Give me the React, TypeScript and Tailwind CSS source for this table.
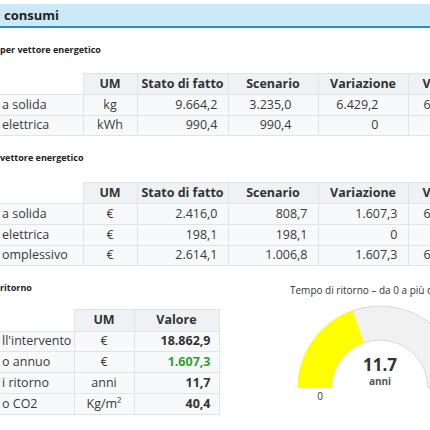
import React from "react";

const border = "border-[#dfe4e8]";

type Row = { label: string; um: string; cells: string[]; last?: string; h: string };

function BigTable({ rows, pads }: { rows: Row[]; pads: string[] }) {
  return (
    <table className="table-fixed border-collapse text-[12.5px] text-[#3a3a3a]" style={{ width: 498 }}>
      <colgroup>
        <col style={{ width: 83 }} />
        <col style={{ width: 54 }} />
        <col style={{ width: 91 }} />
        <col style={{ width: 90 }} />
        <col style={{ width: 90 }} />
        <col style={{ width: 90 }} />
      </colgroup>
      <thead>
        <tr className="h-[21px] text-[12.5px] text-[#333]">
          <th className="bg-white p-0"></th>
          <th className={`bg-[#eef2f5] border ${border} font-bold text-center p-0`}>UM</th>
          <th className={`bg-[#eef2f5] border ${border} font-bold text-center p-0 whitespace-nowrap`}>Stato di fatto</th>
          <th className={`bg-[#eef2f5] border ${border} font-bold text-center p-0`}>Scenario</th>
          <th className={`bg-[#eef2f5] border ${border} font-bold text-center p-0`}>Variazione</th>
          <th className={`bg-[#eef2f5] border ${border} font-bold text-left p-0 pl-[14px] whitespace-nowrap overflow-hidden`}>Variazione %</th>
        </tr>
      </thead>
      <tbody>
        {rows.map((r, i) => (
          <tr key={i} className={`${r.h} bg-[#f8f9fa]`}>
            <td className={`border-b border-t ${border} pl-[2px] p-0 whitespace-nowrap`}>{r.label}</td>
            <td className={`border ${border} text-center p-0`}>{r.um}</td>
            {r.cells.map((c, j) => (
              <td key={j} className={`border ${border} text-right p-0 ${pads[j]}`}>{c}</td>
            ))}
            <td className={`border ${border} text-left p-0 pl-[15px] whitespace-nowrap overflow-hidden`}>{r.last ?? ""}</td>
          </tr>
        ))}
      </tbody>
    </table>
  );
}

export default function App() {
  return (
    <div
      className="w-[430px] h-[430px] overflow-hidden bg-white relative"
      style={{ fontFamily: '"Open Sans", "Liberation Sans", sans-serif' }}
    >
      <div className="mt-[4px] h-[24px] bg-[#cce9f7] border-b-2 border-[#2a8cc2] flex items-center pl-[4px]">
        <span className="text-[13px] font-bold text-[#222] leading-none">consumi</span>
      </div>

      <div className="mt-[16px] h-[12px] text-[9px] font-bold text-[#222] leading-[12px]">per vettore energetico</div>
      <div className="mt-[17px]">
        <BigTable
          pads={["pr-[10px]", "pr-[26px]", "pr-[29px]"]}
          rows={[
            { label: "a solida", um: "kg", cells: ["9.664,2", "3.235,0", "6.429,2"], last: "66,5 %", h: "h-[21px]" },
            { label: "elettrica", um: "kWh", cells: ["990,4", "990,4", "0"], last: "", h: "h-[20px]" },
          ]}
        />
      </div>

      <div className="mt-[16px] h-[12px] text-[9px] font-bold text-[#222] leading-[12px]">vettore energetico</div>
      <div className="mt-[18px]">
        <BigTable
          pads={["pr-[10px]", "pr-[10px]", "pr-[10px]"]}
          rows={[
            { label: "a solida", um: "€", cells: ["2.416,0", "808,7", "1.607,3"], last: "66,5 %", h: "h-[21px]" },
            { label: "elettrica", um: "€", cells: ["198,1", "198,1", "0"], last: "", h: "h-[21px]" },
            { label: "omplessivo", um: "€", cells: ["2.614,1", "1.006,8", "1.607,3"], last: "61,5 %", h: "h-[20px]" },
          ]}
        />
      </div>

      <div className="flex mt-[16px]">
        <div className="w-[218px] shrink-0">
          <div className="h-[12px] text-[9px] font-bold text-[#222] leading-[12px]">ritorno</div>
          <table className="mt-[15px] table-fixed border-collapse text-[12.5px] text-[#3a3a3a]" style={{ width: 219 }}>
            <colgroup>
              <col style={{ width: 74 }} />
              <col style={{ width: 60 }} />
              <col style={{ width: 85 }} />
            </colgroup>
            <thead>
              <tr className="h-[22px] text-[12.5px] text-[#333]">
                <th className="bg-white p-0"></th>
                <th className={`bg-[#eef2f5] border ${border} font-bold text-center p-0`}>UM</th>
                <th className={`bg-[#eef2f5] border ${border} font-bold text-center p-0`}>Valore</th>
              </tr>
            </thead>
            <tbody>
              {[
                { l: "ll'intervento", u: "€", v: "18.862,9", g: false, h: "h-[20px]" },
                { l: "o annuo", u: "€", v: "1.607,3", g: true, h: "h-[21px]" },
                { l: "i ritorno", u: "anni", v: "11,7", g: false, h: "h-[21px]" },
                { l: "o CO2", u: "Kg/m²", v: "40,4", g: false, h: "h-[21px]" },
              ].map((r, i) => (
                <tr key={i} className={`${r.h} bg-[#f8f9fa]`}>
                  <td className={`border-b border-t ${border} p-0 pl-[2px] whitespace-nowrap overflow-hidden`}>{r.l}</td>
                  <td className={`border ${border} text-center p-0`}>{r.u}</td>
                  <td className={`border ${border} text-right p-0 pr-[8px] font-bold ${r.g ? "text-[#2ea12e]" : "text-[#333]"}`}>{r.v}</td>
                </tr>
              ))}
            </tbody>
          </table>
        </div>

        <div className="w-[240px] shrink-0 ml-[42px] flex flex-col">
          <div className="ml-[30px] mt-[1px] text-[10px] text-[#333] whitespace-nowrap leading-[14px]">
            Tempo di ritorno – da 0 a più di 30 anni
          </div>
          <svg width="240" height="112" viewBox="0 0 240 112" className="mt-[1px]">
            <path
              d="M 38 90 A 82 82 0 0 1 202 90 L 168 90 A 48 48 0 0 0 72 90 Z"
              fill="#f1f1f2"
              stroke="#cfcfcf"
              strokeWidth="0.8"
            />
            <path
              d="M 38 90 A 82 82 0 0 1 92.9 12.6 L 104.14 44.7 A 48 48 0 0 0 72 90 Z"
              fill="#ffff00"
            />
            <text x="120" y="73" textAnchor="middle" fontSize="17" fontWeight="bold" fill="#333" fontFamily="Open Sans, sans-serif">
              11.7
            </text>
            <text x="120" y="87" textAnchor="middle" fontSize="10" fontWeight="bold" fill="#555" fontFamily="Open Sans, sans-serif">
              anni
            </text>
            <text x="60" y="102" textAnchor="middle" fontSize="10" fill="#333" fontFamily="Open Sans, sans-serif">
              0
            </text>
          </svg>
        </div>
      </div>
    </div>
  );
}
